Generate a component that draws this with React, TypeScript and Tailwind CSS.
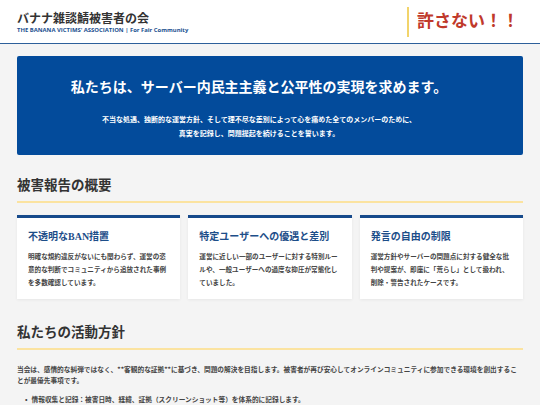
const sans = "font-['Noto_Sans_CJK_JP','Noto_Sans',sans-serif]";
const serif = "font-['Liberation_Serif','Noto_Sans_CJK_JP',serif]";

const reports = [
  {
    title: "不透明なBAN措置",
    body: "明確な規約違反がないにも関わらず、運営の恣意的な判断でコミュニティから追放された事例を多数確認しています。",
  },
  {
    title: "特定ユーザーへの優遇と差別",
    body: "運営に近しい一部のユーザーに対する特別ルールや、一般ユーザーへの過度な抑圧が常態化していました。",
  },
  {
    title: "発言の自由の制限",
    body: "運営方針やサーバーの問題点に対する健全な批判や提案が、即座に「荒らし」として扱われ、削除・警告されたケースです。",
  },
];

function SectionTitle({ children }: { children: string }) {
  return (
    <h2
      className={`${serif} text-[13.5px] leading-[16px] font-bold text-[#333] pb-[7px] border-b-2 border-[#fbe3a0]`}
    >
      {children}
    </h2>
  );
}

export default function App() {
  return (
    <div className={`${sans} min-h-[405px] bg-[#f4f4f4] text-[#333]`}>
      {/* Header */}
      <header className="h-[44px] bg-white border-b-[1.5px] border-[#2d5f9a] px-[17px] flex items-center justify-between">
        <div className="pt-[1px]">
          <h1 className="text-[12px] leading-[14px] font-bold text-[#333]">バナナ雑談鯖被害者の会</h1>
          <p className="text-[5.9px] leading-[7px] font-bold text-[#1a4f8f] mt-[2px] font-['Open_Sans',sans-serif]">
            THE BANANA VICTIMS' ASSOCIATION | For Fair Community
          </p>
        </div>
        <div className="h-[30px] border-l-2 border-[#f2d46b] pl-[8px] pr-[4px] flex items-center">
          <span className={`${serif} text-[17px] font-bold text-[#c0392b]`}>許さない！！</span>
        </div>
      </header>

      <main className="px-[17px] pt-[12px] pb-2">
        {/* Hero */}
        <section className="bg-[#034b9b] rounded-[2px] text-white text-center pt-[24px] pb-[15px] pr-[22px]">
          <p className={`${serif} text-[14px] leading-[16px] font-bold`}>
            私たちは、サーバー内民主主義と公平性の実現を求めます。
          </p>
          <p className="mt-[16px] text-[7px] leading-[14px] font-bold">
            不当な処遇、独断的な運営方針、そして理不尽な差別によって心を痛めた全てのメンバーのために、
            <br />
            真実を記録し、問題提起を続けることを誓います。
          </p>
        </section>

        {/* Reports */}
        <section className="mt-[23px]">
          <SectionTitle>被害報告の概要</SectionTitle>
          <div className="mt-[12px] grid grid-cols-3 gap-[8px]">
            {reports.map((r) => (
              <div
                key={r.title}
                className="bg-white border-t-[3px] border-[#174a8b] shadow-[0_1px_3px_rgba(0,0,0,0.06)] px-[11px] pt-[13px] pb-[10px]"
              >
                <h3 className={`${serif} text-[10px] leading-[12px] font-bold text-[#1d4e89]`}>{r.title}</h3>
                <p className="mt-[6.5px] text-[6.6px] leading-[13px] font-semibold text-[#444]">{r.body}</p>
              </div>
            ))}
          </div>
        </section>

        {/* Policy */}
        <section className="mt-[26px]">
          <SectionTitle>私たちの活動方針</SectionTitle>
          <p className="mt-[14px] text-[6.7px] leading-[11.5px] font-semibold text-[#444]">
            当会は、感情的な糾弾ではなく、**客観的な証拠**に基づき、問題の解決を目指します。被害者が再び安心してオンラインコミュニティに参加できる環境を創出するこ
            <br />
            とが最優先事項です。
          </p>
          <ul className="mt-[7px] pl-[8px] text-[6.7px] leading-[11px] font-semibold text-[#444]">
            <li className="flex gap-[4px]">
              <span>•</span>
              <span>情報収集と記録：被害日時、経緯、証拠（スクリーンショット等）を体系的に記録します。</span>
            </li>
          </ul>
        </section>
      </main>
    </div>
  );
}
